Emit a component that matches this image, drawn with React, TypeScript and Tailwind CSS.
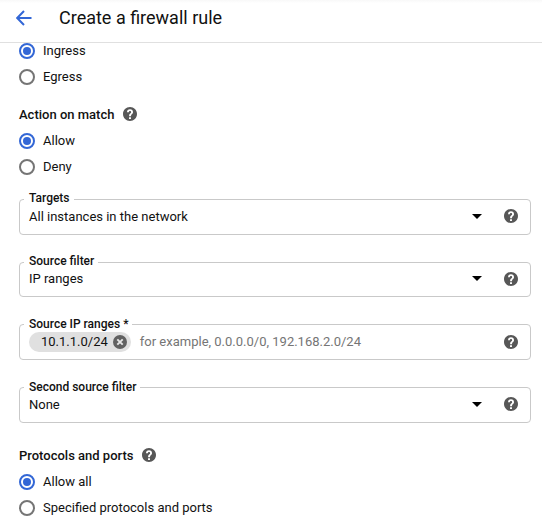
import type { ReactNode } from "react";

function HelpIcon() {
  return (
    <svg viewBox="2 2 20 20" className="size-3.5 shrink-0 fill-[#575757]">
      <path d="M12 2C6.48 2 2 6.48 2 12s4.480 10 10 10 10-4.480 10-10S17.520 2 12 2zm1.400 17.200h-2.800v-2.600h2.800zm2-7.600-.9.900c-.7.700-1.100 1.400-1.100 2.700h-2.700v-.6c0-1.100.4-2.100 1.200-2.800l1.200-1.200c.35-.35.5-.75.500-1.200 0-.9-.7-1.600-1.600-1.600s-1.600.7-1.600 1.600H7.700a4.300 4.300 0 0 1 8.600 0c0 .85-.4 1.600-.9 2.200z" />
    </svg>
  );
}

function Radio({ label, checked = false }: { label: string; checked?: boolean }) {
  return (
    <label className="flex h-[26px] items-center gap-2">
      <span
        className={
          checked
            ? "flex size-4 items-center justify-center rounded-full border-2 border-[#3367d6]"
            : "flex size-4 items-center justify-center rounded-full border-2 border-[#757575]"
        }
      >
        {checked && <span className="size-2 rounded-full bg-[#3367d6]" />}
      </span>
      <span>{label}</span>
    </label>
  );
}

function Heading({ children }: { children: ReactNode }) {
  return (
    <h2 className="flex h-[26px] items-center gap-[9px] font-medium">
      <span className="pt-0.5">{children}</span>
      <HelpIcon />
    </h2>
  );
}

type FieldProps = {
  label: string;
  children: ReactNode;
  select?: boolean;
  box?: string;
  help?: string;
  caption?: string;
};

function Field({
  label,
  children,
  select = true,
  box = "h-9 pt-[7px]",
  help = "pt-0.5",
  caption = "-top-[9px]",
}: FieldProps) {
  return (
    <div className={`relative flex items-start rounded-[4px] border border-[#c9c9c9] pr-3 pl-[9px] ${box}`}>
      <span className={`absolute left-1 bg-white pr-1 pl-[5px] text-xs leading-4 font-medium ${caption}`}>
        {label}
      </span>
      <div className="flex h-5 flex-1 items-center">{children}</div>
      {select && (
        <svg viewBox="0 0 10 5" className="mt-[7px] mr-[22px] h-[5px] w-2.5 fill-black">
          <path d="M0 0h10L5 5z" />
        </svg>
      )}
      <div className={help}>
        <HelpIcon />
      </div>
    </div>
  );
}

export default function App() {
  return (
    <div className="h-[528px] w-[542px] overflow-hidden bg-white font-[Roboto,sans-serif] text-[13px] leading-5 text-[#111]">
      <header className="flex h-[43px] items-center border-b border-[#e0e0e0] bg-[linear-gradient(#f8f8f8,white_3px)] pb-[7px] pl-4">
        <svg viewBox="0 0 16 16" className="size-4 fill-none stroke-[#3367d6] stroke-2">
          <path d="M15.500 8H1.500M8 1 1.200 8 8 15" />
        </svg>
        <h1 className="ml-[27px] text-lg leading-6">Create a firewall rule</h1>
      </header>
      <main className="-mt-[5px] pr-[11px] pl-[19px]">
        <Radio label="Ingress" checked />
        <Radio label="Egress" />
        <div className="mt-[11px]">
          <Heading>Action on match</Heading>
        </div>
        <div className="mt-px">
          <Radio label="Allow" checked />
          <Radio label="Deny" />
        </div>
        <div className="mt-[19px] flex flex-col gap-[27px]">
          <Field label="Targets" caption="-top-2.5" >
            All instances in the network
          </Field>
          <Field label="Source filter" box="h-[35px] pt-1.5" help="pt-[3px]" caption="-top-2.5">
            IP ranges
          </Field>
          <Field label="Source IP ranges *" select={false} help="pt-[3px]">
            <span className="flex h-5 items-center gap-[5px] rounded-full bg-[#e0e0e0] pr-1 pl-3">
              10.1.1.0/24
              <svg viewBox="0 0 14 14" className="size-3.5">
                <circle cx="7" cy="7" r="7" fill="#616161" />
                <path d="m4.300 4.300 5.400 5.400m0-5.400-5.400 5.400" stroke="#e6e6e6" strokeWidth="1.900" />
              </svg>
            </span>
            <span className="ml-[9px] text-[#757575]">for example, 0.0.0.0/0, 192.168.2.0/24</span>
          </Field>
          <Field label="Second source filter">None</Field>
        </div>
        <div className="mt-[19px]">
          <Heading>Protocols and ports</Heading>
        </div>
        <div className="mt-px">
          <Radio label="Allow all" checked />
          <Radio label="Specified protocols and ports" />
        </div>
      </main>
    </div>
  );
}
